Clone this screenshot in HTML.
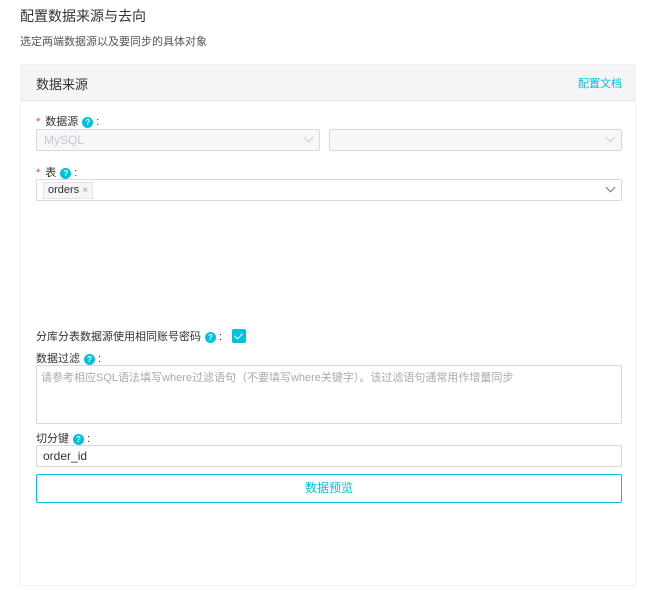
<!DOCTYPE html>
<html><head><meta charset="utf-8"><style>
*{box-sizing:border-box;margin:0;padding:0}
body{width:650px;height:598px;background:#fff;font-family:"Liberation Sans","Noto Sans CJK SC",sans-serif;color:#333;position:relative;overflow:hidden}
.a{position:absolute}
.q{display:inline-block;width:11px;height:11px;border-radius:50%;background:#00c1de;color:#fff;font-size:8px;line-height:11px;text-align:center;font-weight:bold;vertical-align:0px;margin:0 3px 0 4px}
.lbl{font-size:11px;color:#333}
.star{color:#f04645;margin-right:5px}
.box{border:1px solid #d7d8e0;border-radius:2px;background:#fff}
.chev{position:absolute;right:7px;top:4px;width:7px;height:7px;border-right:1.5px solid #999;border-bottom:1.5px solid #999;transform:rotate(45deg)}
</style></head><body>
<div class="a" style="left:20px;top:6px;font-size:14px;color:#333">配置数据来源与去向</div>
<div class="a" style="left:20px;top:33px;font-size:11px;color:#555">选定两端数据源以及要同步的具体对象</div>
<div class="a" style="left:20px;top:64px;width:616px;height:522px;border:1px solid #f2f2f4;background:#fff">
 <div style="height:36px;background:#f5f5f7;border-bottom:1px solid #e3e3ea;position:relative">
  <div class="a" style="left:15px;top:9px;font-size:13px;color:#333">数据来源</div>
  <div class="a" style="right:13px;top:10px;font-size:11px;color:#00c1de">配置文档</div>
 </div>
</div>
<div class="a lbl" style="left:36px;top:113px"><span class="star">*</span>数据源<span class="q">?</span>:</div>
<div class="a box" style="left:36px;top:129px;width:284px;height:22px;background:#f7f7f9"><span style="position:absolute;left:7px;top:3px;font-size:12px;color:#c8c8d0">MySQL</span><div class="chev" style="border-color:#ccc"></div></div>
<div class="a box" style="left:329px;top:129px;width:293px;height:22px;background:#f7f7f9"><div class="chev" style="border-color:#ccc"></div></div>
<div class="a lbl" style="left:36px;top:164px"><span class="star">*</span>表<span class="q">?</span>:</div>
<div class="a box" style="left:36px;top:179px;width:586px;height:22px"><span style="position:absolute;left:6px;top:2px;height:17px;padding:0 4px;border:1px solid #e3e3ea;background:#f5f5f7;font-size:11px;line-height:15px;color:#333">orders <span style="color:#999;font-size:10px">×</span></span><div class="chev" style="border-color:#777"></div></div>
<div class="a lbl" style="left:36px;top:328px">分库分表数据源使用相同账号密码<span class="q">?</span>:</div>
<div class="a" style="left:232px;top:329px;width:14px;height:14px;background:#00c1de;border-radius:2px"><div style="position:absolute;left:4px;top:2px;width:5px;height:8px;border-right:1.5px solid #fff;border-bottom:1.5px solid #fff;transform:rotate(45deg)"></div></div>
<div class="a lbl" style="left:36px;top:350px">数据过滤<span class="q">?</span>:</div>
<div class="a box" style="left:36px;top:365px;width:586px;height:59px"><span style="position:absolute;left:4px;top:3px;font-size:11px;color:#aaa">请参考相应SQL语法填写where过滤语句（不要填写where关键字）。该过滤语句通常用作增量同步</span></div>
<div class="a lbl" style="left:36px;top:430px">切分键<span class="q">?</span>:</div>
<div class="a box" style="left:36px;top:445px;width:586px;height:22px"><span style="position:absolute;left:6px;top:3px;font-size:12px;color:#333">order_id</span></div>
<div class="a" style="left:36px;top:474px;width:586px;height:29px;border:1px solid #00c1de;border-radius:2px;text-align:center;line-height:27px;font-size:12px;color:#00c1de">数据预览</div>
</body></html>
